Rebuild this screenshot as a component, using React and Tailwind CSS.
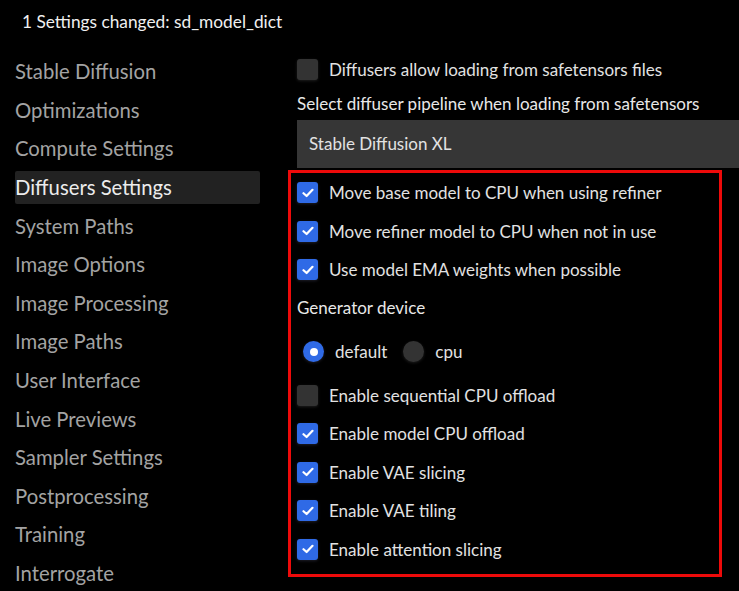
import React from "react";

const sidebar = [
  "Stable Diffusion",
  "Optimizations",
  "Compute Settings",
  "Diffusers Settings",
  "System Paths",
  "Image Options",
  "Image Processing",
  "Image Paths",
  "User Interface",
  "Live Previews",
  "Sampler Settings",
  "Postprocessing",
  "Training",
  "Interrogate",
];

function Check({ checked }) {
  return checked ? (
    <span className="flex h-[21px] w-[21px] shrink-0 items-center justify-center rounded-[3px] bg-[#2f6ae6] shadow-[0_1px_3px_rgba(60,60,80,0.5)]">
      <svg width="12" height="10" viewBox="0 0 12 10">
        <path d="M1.5 5.2 L4.6 8 L10.5 1.8" fill="none" stroke="white" strokeWidth="2.2" strokeLinecap="round" strokeLinejoin="round" />
      </svg>
    </span>
  ) : (
    <span className="h-[21px] w-[21px] shrink-0 rounded-[3px] bg-[#333333] shadow-[0_1px_3px_rgba(60,60,60,0.5)]" />
  );
}

function Row({ checked, label }) {
  return (
    <div className="flex h-[38.5px] items-center gap-[11px]">
      <Check checked={checked} />
      <span className="text-[17px] text-[#e2e2e2]">{label}</span>
    </div>
  );
}

export default function App() {
  return (
    <div
      className="h-[591px] w-[739px] overflow-hidden bg-black"
      style={{ fontFamily: "Lato, 'Noto Sans', sans-serif" }}
    >
      <div className="flex h-[44px] items-center pl-[22px] text-[17.3px] text-[#f0f0f0]">
        1 Settings changed: sd_model_dict
      </div>
      <div className="flex">
        <div className="ml-[15px] mt-[11px] w-[245px] shrink-0">
          {sidebar.map((s) => (
            <div
              key={s}
              className={
                "mb-[5.6px] flex h-[33px] items-center rounded-[2px] text-[20.3px] " +
                (s === "Diffusers Settings" ? "bg-[#222222] text-[#ececec]" : "text-[#a3a3a3]")
              }
            >
              {s}
            </div>
          ))}
        </div>
        <div className="ml-[37px] flex-1">
          <div className="mt-[6px]">
            <Row checked={false} label="Diffusers allow loading from safetensors files" />
          </div>
          <div className="flex h-[31px] items-center text-[17px] text-[#e8e8e8]">
            Select diffuser pipeline when loading from safetensors
          </div>
          <div className="flex h-[48px] items-center bg-[#363636] pl-[12px] text-[17px] text-[#e2e2e2]">
            Stable Diffusion XL
          </div>
          <div className="ml-[-9px] mt-[2px] w-[434px] border-[3px] border-[#ee0a0a] px-[6px] pt-[1px]">
            <Row checked label="Move base model to CPU when using refiner" />
            <Row checked label="Move refiner model to CPU when not in use" />
            <Row checked label="Use model EMA weights when possible" />
            <div className="flex h-[38px] items-center text-[17px] text-[#e8e8e8]">
              Generator device
            </div>
            <div className="flex h-[49px] items-center pl-[6px]">
              <span className="flex h-[21px] w-[21px] items-center justify-center rounded-full bg-[#2f6ae6] shadow-[0_1px_3px_rgba(60,60,80,0.5)]">
                <span className="h-[8px] w-[8px] rounded-full bg-white" />
              </span>
              <span className="ml-[11px] text-[17px] text-[#e2e2e2]">default</span>
              <span className="ml-[16px] h-[21px] w-[21px] rounded-full bg-[#333333] shadow-[0_1px_3px_rgba(60,60,60,0.5)]" />
              <span className="ml-[11px] text-[17px] text-[#e2e2e2]">cpu</span>
            </div>
            <Row checked={false} label="Enable sequential CPU offload" />
            <Row checked label="Enable model CPU offload" />
            <Row checked label="Enable VAE slicing" />
            <Row checked label="Enable VAE tiling" />
            <Row checked label="Enable attention slicing" />
            <div className="h-[5px]" />
          </div>
        </div>
      </div>
    </div>
  );
}
